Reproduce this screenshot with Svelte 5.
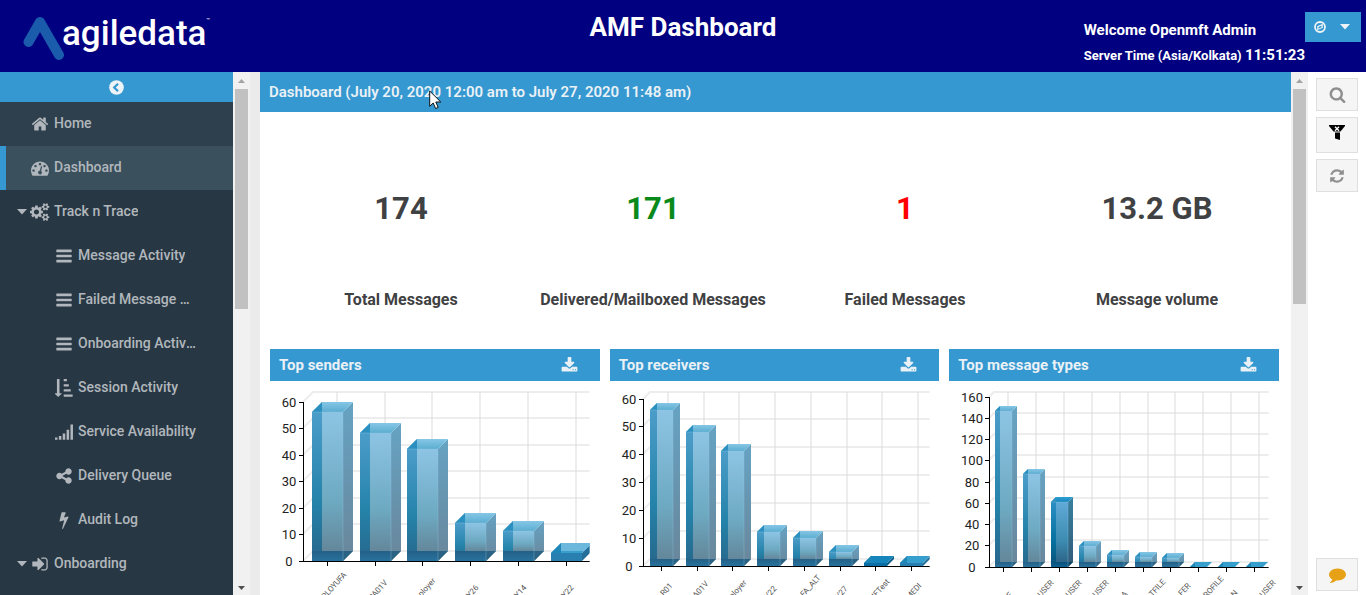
<script>
  const bars = 'M1664 1344v128q0 26-19 45t-45 19h-1408q-26 0-45-19t-19-45v-128q0-26 19-45t45-19h1408q26 0 45 19t19 45zm0-512v128q0 26-19 45t-45 19h-1408q-26 0-45-19t-19-45v-128q0-26 19-45t45-19h1408q26 0 45 19t19 45zm0-512v128q0 26-19 45t-45 19h-1408q-26 0-45-19t-19-45v-128q0-26 19-45t45-19h1408q26 0 45 19t19 45z';
  const icons = {
    home: 'M1472 992v480q0 26-19 45t-45 19h-384v-384h-256v384h-384q-26 0-45-19t-19-45v-480q0-1 .5-3t.5-3l575-474 575 474q1 2 1 6zm223-69l-62 74q-8 9-21 11h-3q-13 0-21-7l-692-577-692 577q-12 8-24 7-13-2-21-11l-62-74q-8-10-7-23.5t11-21.5l719-599q32-26 76-26t76 26l244 204v-195q0-14 9-23t23-9h192q14 0 23 9t9 23v408l219 182q10 8 11 21.5t-7 23.5z',
    gauge: 'M384 1152q0-53-37.5-90.5t-90.5-37.5-90.5 37.5-37.5 90.5 37.5 90.5 90.5 37.5 90.5-37.5 37.5-90.5zm192-448q0-53-37.5-90.5t-90.5-37.5-90.5 37.5-37.5 90.5 37.5 90.5 90.5 37.5 90.5-37.5 37.5-90.5zm428 481l101-382q6-26-7.5-48.5t-38.5-29.5-48 6.5-30 39.5l-101 382q-60 5-107 43.5t-63 98.5q-20 77 20 146t117 89 146-20 89-117q16-60-6-117t-72-91zm660-33q0-53-37.5-90.5t-90.5-37.5-90.5 37.5-37.5 90.5 37.5 90.5 90.5 37.5 90.5-37.5 37.5-90.5zm-640-640q0-53-37.5-90.5t-90.5-37.5-90.5 37.5-37.5 90.5 37.5 90.5 90.5 37.5 90.5-37.5 37.5-90.5zm448 192q0-53-37.5-90.5t-90.5-37.5-90.5 37.5-37.5 90.5 37.5 90.5 90.5 37.5 90.5-37.5 37.5-90.5zm320 448q0 261-141 483-19 29-54 29h-1402q-35 0-54-29-141-221-141-483 0-182 71-348t191-286 286-191 348-71 348 71 286 191 191 286 71 348z',
    cogs: 'M832 896q0-106-75-181t-181-75-181 75-75 181 75 181 181 75 181-75 75-181zm768 512q0-52-38-90t-90-38-90 38-38 90q0 53 37.5 90.5t90.5 37.5 90.5-37.5 37.5-90.5zm0-1024q0-52-38-90t-90-38-90 38-38 90q0 53 37.5 90.5t90.5 37.5 90.5-37.5 37.5-90.5zm-384 421v185q0 10-7 19.5t-16 10.5l-155 24q-11 35-32 76 34 48 90 115 7 11 7 20 0 12-7 19-23 30-82.500 89.500t-78.500 59.500q-11 0-21-7l-115-90q-37 19-77 31-11 108-23 155-7 24-30 24h-186q-11 0-20-7.500t-10-17.500l-23-153q-34-10-75-31l-118 89q-7 7-20 7-11 0-21-8-144-133-144-160 0-9 7-19 10-14 41-53t47-61q-23-44-35-82l-152-24q-10-1-17-9.500t-7-19.500v-185q0-10 7-19.500t16-10.500l155-24q11-35 32-76-34-48-90-115-7-11-7-20 0-12 7-20 22-30 82-89t79-59q11 0 21 7l115 90q34-18 77-32 11-108 23-154 7-24 30-24h186q11 0 20 7.500t10 17.500l23 153q34 10 75 31l118-89q8-7 20-7 11 0 21 8 144 133 144 160 0 8-7 19-12 16-42 54t-45 60q23 48 34 82l152 23q10 2 17 10.500t7 19.500zm640 533v140q0 16-149 31-12 27-30 52 51 113 51 138 0 4-4 7-122 71-124 71-8 0-46-47t-52-68q-20 2-30 2t-30-2q-14 21-52 68t-46 47q-2 0-124-71-4-3-4-7 0-25 51-138-18-25-30-52-149-15-149-31v-140q0-16 149-31 13-29 30-52-51-113-51-138 0-4 4-7 4-2 35-20t59-34 30-16q8 0 46 46.500t52 67.500q20-2 30-2t30 2q51-71 92-112l6-2q4 0 124 70 4 3 4 7 0 25-51 138 17 23 30 52 149 15 149 31zm0-1024v140q0 16-149 31-12 27-30 52 51 113 51 138 0 4-4 7-122 71-124 71-8 0-46-47t-52-68q-20 2-30 2t-30-2q-14 21-52 68t-46 47q-2 0-124-71-4-3-4-7 0-25 51-138-18-25-30-52-149-15-149-31v-140q0-16 149-31 13-29 30-52-51-113-51-138 0-4 4-7 4-2 35-20t59-34 30-16q8 0 46 46.500t52 67.500q20-2 30-2t30 2q51-71 92-112l6-2q4 0 124 70 4 3 4 7 0 25-51 138 17 23 30 52 149 15 149 31z',
    bars,
    sort: 'M224 0h192q32 0 32 32v1376h192q60 8 22 64l-320 300q-22 20-44 0l-320-300q-34-52 22-64h192V32q0-32 32-32zM896 0h256q32 0 32 32v160q0 32-32 32h-256q-32 0-32-32V32q0-32 32-32zM896 512h448q32 0 32 32v160q0 32-32 32h-448q-32 0-32-32V544q0-32 32-32zM896 1024h640q32 0 32 32v160q0 32-32 32h-640q-32 0-32-32v-160q0-32 32-32zM896 1536h832q32 0 32 32v160q0 32-32 32h-832q-32 0-32-32v-160q0-32 32-32z',
    signal: 'M0 1440h250v220H0zM385 1290h250v370H385zM770 1040h250v620H770zM1155 660h250v1000h-250zM1540 150h250v1510h-250z',
    share: 'M1344 1024q133 0 226.500 93.500t93.500 226.500-93.500 226.500-226.500 93.500-226.500-93.500-93.500-226.500q0-12 2-34l-360-180q-92 86-218 86-133 0-226.500-93.500t-93.500-226.500 93.500-226.500 226.500-93.500q126 0 218 86l360-180q-2-22-2-34 0-133 93.500-226.500t226.500-93.500 226.500 93.500 93.500 226.500-93.500 226.500-226.500 93.500q-126 0-218-86l-360 180q2 22 2 34t-2 34l360 180q92-86 218-86z',
    bolt: 'M1333 566q18 20 7 44l-540 1157q-13 25-42 25-4 0-14-2-17-5-25.500-19t-4.500-30l197-808-406 101q-4 1-12 1-18 0-31-11-18-15-13-39l201-825q4-14 16-23t28-9h328q19 0 32 12.500t13 29.500q0 8-5 18l-171 463 396-98q8-2 12-2 19 0 34 15z',
    signin: 'M1312 896q0 26-19 45l-544 544q-19 19-45 19t-45-19-19-45v-288h-448q-26 0-45-19t-19-45v-384q0-26 19-45t45-19h448v-288q0-26 19-45t45-19 45 19l544 544q19 19 19 45zm352-352v704q0 119-84.500 203.500t-203.500 84.500h-320q-13 0-22.500-9.500t-9.500-22.500q0-4-1-20t-.5-26.500 3-23.500 10-19.500 20.500-6.500h320q66 0 113-47t47-113v-704q0-66-47-113t-113-47h-312l-11.500-1-11.500-3-8-5.500-7-9-2-13.500q0-4-1-20t-.5-26.500 3-23.500 10-19.500 20.500-6.500h320q119 0 203.500 84.500t84.500 203.500z',
    download: 'M1344 1344q0-26-19-45t-45-19-45 19-19 45 19 45 45 19 45-19 19-45zm256 0q0-26-19-45t-45-19-45 19-19 45 19 45 45 19 45-19 19-45zm128-224v320q0 40-28 68t-68 28h-1472q-40 0-68-28t-28-68v-320q0-40 28-68t68-28h465l135 136q58 56 136 56t136-56l136-136h464q40 0 68 28t28 68zm-325-569q17 41-14 70l-448 448q-18 19-45 19t-45-19l-448-448q-31-29-14-70 17-39 59-39h256v-448q0-26 19-45t45-19h256q26 0 45 19t19 45v448h256q42 0 59 39z',
    search: 'M1216 832q0-185-131.500-316.500t-316.500-131.500-316.500 131.500-131.500 316.500 131.500 316.500 316.500 131.500 316.500-131.500 131.500-316.500zm512 832q0 52-38 90t-90 38q-54 0-90-38l-343-342q-179 124-399 124-143 0-273.500-55.500t-225-150-150-225-55.500-273.500 55.500-273.500 150-225 225-150 273.500-55.500 273.500 55.500 225 150 150 225 55.500 273.500q0 220-124 399l343 343q37 37 37 90z',
    refresh: 'M1639 1056q0 5-1 7-64 268-268 434.500t-478 166.500q-146 0-282.500-55t-243.500-157l-129 129q-19 19-45 19t-45-19-19-45v-448q0-26 19-45t45-19h448q26 0 45 19t19 45-19 45l-137 137q71 66 161 102t187 36q134 0 250-65t186-179q11-17 53-117 8-23 30-23h192q13 0 22.500 9.500t9.500 22.500zm25-800v448q0 26-19 45t-45 19h-448q-26 0-45-19t-19-45 19-45l138-138q-148-137-349-137-134 0-250 65t-186 179q-11 17-53 117-8 23-30 23h-199q-13 0-22.500-9.500t-9.500-22.500v-7q65-268 270-434.500t480-166.500q146 0 284 55.500t245 156.500l130-129q19-19 45-19t45 19 19 45z',
    comment: 'M1792 896q0 174-120 321.500t-326 233-450 85.500q-70 0-145-8-198 175-460 242-49 14-114 22-17 2-30.500-9t-17.500-29v-1q-3-4-.5-12t2-10 4.500-9.500l6-9 7-8.500 8-9q7-8 31-34.500t34.500-38 31-39.500 32.500-51 27-59 26-76q-157-89-247.500-220t-90.500-281q0-130 71-248.500t191-204.500 286-136.500 348-50.500q244 0 450 85.500t326 233 120 321.500z'
  };

  const menu = [
    { label: 'Home', icon: 'home', size: 18, kind: 'top' },
    { label: 'Dashboard', icon: 'gauge', size: 18, kind: 'active' },
    { label: 'Track n Trace', icon: 'cogs', size: 20, caret: true },
    { label: 'Message Activity', icon: 'bars', size: 18, sub: true },
    { label: 'Failed Message Activity', icon: 'bars', size: 18, sub: true },
    { label: 'Onboarding Activity', icon: 'bars', size: 18, sub: true },
    { label: 'Session Activity', icon: 'sort', size: 18, sub: true },
    { label: 'Service Availability', icon: 'signal', size: 18, sub: true },
    { label: 'Delivery Queue', icon: 'share', size: 18, sub: true },
    { label: 'Audit Log', icon: 'bolt', size: 18, sub: true },
    { label: 'Onboarding', icon: 'signin', size: 18, caret: true }
  ];

  const stats = [
    { value: '174', label: 'Total Messages', tone: '' },
    { value: '171', label: 'Delivered/Mailboxed Messages', tone: 'good' },
    { value: '1', label: 'Failed Messages', tone: 'bad' },
    { value: '13.2 GB', label: 'Message volume', tone: '' }
  ];

  // Each label carries the point at which its rotated text ends.
  const charts = [
    {
      title: 'Top senders', axis: 33, base: 180, top: 21, max: 60, every: 10,
      depth: 10, first: 42, step: 47.7, width: 31, tickX: 19,
      values: [56, 48, 42, 14, 11, 3], strong: [],
      labels: [['PLOYUFA', 77, 194], ['PA01V', 118, 202], ['ployer', 166, 200], ['Y26', 209, 207], ['Y14', 257, 207], ['Y22', 304, 207]]
    },
    {
      title: 'Top receivers', axis: 33, base: 185, top: 18, max: 60, every: 10,
      depth: 7, first: 40, step: 35.7, width: 23, tickX: 19,
      values: [56, 48, 41, 12, 10, 5, 1, 1], strong: [6],
      labels: [['LR01', 63, 205], ['A01V', 99, 203], ['ployer', 137, 202], ['Y22', 167, 208], ['FA_ALT', 211, 197], ['Y27', 238, 208], ['IFTest', 280, 201], ['MEDI', 312, 205]]
    },
    {
      title: 'Top message types', axis: 40, base: 186, top: 16, max: 160, every: 20,
      depth: 5, first: 46, step: 27.9, width: 17, tickX: 23,
      values: [146, 87, 61, 19, 11, 9, 8, 0, 0, 0], strong: [2],
      labels: [['E', 64, 214], ['USER', 105, 202], ['USER', 133, 202], ['USER', 160, 202], ['A', 179, 213], ['TFILE', 217, 201], ['FER', 242, 205], ['ROFILE', 275, 198], ['N', 289, 212], ['USER', 327, 202]]
    }
  ];

  function ticks(c) {
    const n = c.max / c.every;
    return Array.from({ length: n + 1 }, (_, i) => ({
      value: i * c.every,
      y: Math.floor(c.base - (i * (c.base - c.top)) / n)
    }));
  }

  function columns(c) {
    return c.values.map((v, i) => {
      const x = Math.round(c.first + i * c.step);
      const y = Math.floor(c.base - (v / c.max) * (c.base - c.top));
      return { x, y, r: x + c.width, h: c.base - y, mid: x + Math.round(c.width / 2) - 1, tone: c.strong.includes(i) ? 'strong' : 'soft' };
    });
  }
</script>

{#snippet glyph(name, size)}
  <svg class="glyph" width={size} height={Math.min(size, 18)} viewBox={name === 'cogs' ? '0 0 1856 1792' : '0 0 1792 1792'} aria-hidden="true">
    <path d={icons[name]} />
  </svg>
{/snippet}

{#snippet scrollbar(length)}
  <div class="scrollbar" aria-hidden="true">
    <svg width="17" height="17"><path d="M5 11h7l-3.500-4z" fill="#a3a3a3" /></svg>
    <div class="thumb" style:height="{length}px"></div>
    <svg class="down" width="17" height="17"><path d="M5 8h7l-3.500 4z" fill="#505050" /></svg>
  </div>
{/snippet}

<svg class="defs" width="0" height="0" aria-hidden="true">
  <defs>
    <linearGradient id="soft-left" x2="0" y2="1"><stop offset="0" stop-color="#4b9dc9" /><stop offset=".6" stop-color="#2583aa" /><stop offset="1" stop-color="#27668b" /></linearGradient>
    <linearGradient id="soft-mid" x2="0" y2="1"><stop offset="0" stop-color="#8dc4e4" /><stop offset=".65" stop-color="#6da9c1" /><stop offset="1" stop-color="#64879a" /></linearGradient>
    <linearGradient id="soft-right" x2="0" y2="1"><stop offset="0" stop-color="#66a3c3" /><stop offset="1" stop-color="#69869a" /></linearGradient>
    <linearGradient id="soft-top" x2="0" y2="1"><stop offset="0" stop-color="#86c6e6" /><stop offset="1" stop-color="#5badd0" /></linearGradient>
    <linearGradient id="soft-foot" x2="0" y2="1"><stop offset="0" stop-color="#245f86" /><stop offset="1" stop-color="#28739e" /></linearGradient>
    <linearGradient id="strong-left" x2="0" y2="1"><stop offset="0" stop-color="#2b8ec4" /><stop offset=".6" stop-color="#08719f" /><stop offset="1" stop-color="#0a5178" /></linearGradient>
    <linearGradient id="strong-mid" x2="0" y2="1"><stop offset="0" stop-color="#60aad8" /><stop offset=".65" stop-color="#3c8bb0" /><stop offset="1" stop-color="#2c6589" /></linearGradient>
    <linearGradient id="strong-right" x2="0" y2="1"><stop offset="0" stop-color="#38819f" /><stop offset="1" stop-color="#305a78" /></linearGradient>
    <linearGradient id="strong-top" x2="0" y2="1"><stop offset="0" stop-color="#2f9fd2" /><stop offset="1" stop-color="#1685bb" /></linearGradient>
    <linearGradient id="strong-foot" x2="0" y2="1"><stop offset="0" stop-color="#0a5079" /><stop offset="1" stop-color="#0d6293" /></linearGradient>
  </defs>
</svg>

<div class="app">
  <header>
    <a class="logo" href="#home" aria-label="agiledata">
      <svg width="44" height="48" viewBox="0 0 44 48" aria-hidden="true">
        <path d="M6.500 28 18 8 37 41" fill="none" stroke="#1a5cab" stroke-width="10" stroke-linecap="round" stroke-linejoin="round" />
      </svg>
      <span class="brand">agiledata</span><span class="tm">™</span>
    </a>
    <h1>AMF Dashboard</h1>
    <div class="account">
      <div class="welcome">
        <div class="user">Welcome Openmft Admin</div>
        <div class="time">Server Time (Asia/Kolkata) <span>11:51:23</span></div>
      </div>
      <button class="account-menu" aria-label="Account menu">
        <svg width="12" height="12" viewBox="0 0 12 12" aria-hidden="true">
          <circle cx="6" cy="6" r="5" fill="none" stroke="#eef3f7" stroke-width="1.800" />
          <path d="M8.800 2.700v4.100L3.200 9.300V5.200zM4.500 6v1.800L7.500 6.200V4.400z" fill="#eef3f7" fill-rule="evenodd" />
        </svg>
        <svg width="10" height="6" viewBox="0 0 10 6" aria-hidden="true"><path d="M0 0h10L5 5.500z" fill="#eef3f7" /></svg>
      </button>
    </div>
  </header>

  <div class="body">
    <nav aria-label="Main">
      <button class="collapse" aria-label="Collapse menu">
        <svg width="15" height="15" viewBox="0 0 15 15" aria-hidden="true">
          <circle cx="7.500" cy="7.500" r="7.300" fill="#eef3f7" />
          <path d="M9 3.700 5.200 7.500 9 11.300" fill="none" stroke="#3598d0" stroke-width="2.200" />
        </svg>
      </button>
      <ul>
        {#each menu as item}
          <li>
            <a href="#menu" class={item.kind ?? ''} class:sub={item.sub}>
              <span class="caret">
                {#if item.caret}
                  <svg width="10" height="6" viewBox="0 0 10 6" aria-hidden="true"><path d="M0 0h10L5 5.500z" /></svg>
                {/if}
              </span>
              <span class="icon">{@render glyph(item.icon, item.size)}</span>
              <span class="text">{item.label}</span>
            </a>
          </li>
        {/each}
      </ul>
    </nav>
    {@render scrollbar(220)}

    <main>
      <h2>Dashboard (July 20, 2020 12:00 am to July 27, 2020 11:48 am)</h2>
      <section class="stats">
        {#each stats as s}
          <div class="stat">
            <div class="value {s.tone}">{s.value}</div>
            <div class="label">{s.label}</div>
          </div>
        {/each}
      </section>

      <section class="charts">
        {#each charts as c}
          <article>
            <div class="panel-head">
              <h3>{c.title}</h3>
              <button aria-label="Download {c.title}">{@render glyph('download', 17)}</button>
            </div>
            <svg class="chart" height="230" role="img" aria-label={c.title}>
              <svg width="100%" height="200">
                <g class="grid">
                  {#each ticks(c) as t}
                    <path d="M{c.axis} {t.y}l{c.depth} {-c.depth}h400" />
                  {/each}
                  {#each columns(c) as b}
                    <path d="M{b.mid + c.depth} {c.top - c.depth}V{c.base - c.depth}" />
                  {/each}
                </g>
                {#each columns(c) as b}
                  {@const d = c.depth}
                  {#if b.h > d}
                    <path d="M{b.x} {b.y}h{d}V{c.base - d}L{b.x} {c.base}z" fill="url(#{b.tone}-left)" />
                    <path d="M{b.x + d} {b.y}H{b.r}V{c.base - d}H{b.x + d}z" fill="url(#{b.tone}-mid)" />
                    <path d="M{b.r} {b.y}l{d} {-d}V{c.base - d}L{b.r} {c.base}z" fill="url(#{b.tone}-right)" />
                    <path d="M{b.x} {c.base}v{-d}H{b.r}v{d}z" fill="url(#{b.tone}-foot)" />
                    <path d="M{b.r} {c.base}v{-d}h{d}z" fill={b.tone === 'strong' ? '#0a4568' : '#2a6283'} />
                    <path d="M{b.x} {b.y}l{d} {-d}H{b.r + d}L{b.r} {b.y}z" fill="url(#{b.tone}-top)" />
                    <path d="M{b.x} {b.y}l{d} {-d}v{d}z" fill="#2b8fbf" />
                    <path d="M{b.r} {b.y}V{c.base}M{b.x} {b.y}H{b.r}" stroke="#8fc5e2" stroke-opacity=".35" />
                  {:else}
                    <path d="M{b.x} {b.y}H{b.r}V{c.base}H{b.x}z" fill={b.tone === 'strong' ? '#0b6fa6' : '#287fb0'} />
                    <path d="M{b.r} {b.y}l{d} {-d}v{b.h}L{b.r} {c.base}z" fill={b.tone === 'strong' ? '#0d5d8a' : '#246f99'} />
                    <path d="M{b.x} {b.y}l{d} {-d}H{b.r + d}L{b.r} {b.y}z" fill={b.tone === 'strong' ? '#1685bb' : '#379fcd'} />
                    {#if b.h > 5}
                      <path d="M{b.x + d} {b.y - d}H{b.r + d}L{b.r + 2} {b.y - 2}H{b.x + d}z" fill="#6bb8dc" />
                    {/if}
                    <path d="M{b.x} {b.y}l{d} {-d}v{d}z" fill="#1f86b8" />
                  {/if}
                {/each}
                <g class="axis">
                  <path d="M{c.axis + 0.5} {c.top}V{c.base + 0.5}H420" />
                  {#each ticks(c) as t}<path d="M{c.axis - 4} {t.y + 0.5}h5" />{/each}
                  {#each columns(c) as b}<path d="M{b.mid + 0.5} {c.base}v5" />{/each}
                </g>
              </svg>
              {#each ticks(c) as t}
                <text class="tick" x={c.tickX} y={t.y + 5}>{t.value}</text>
              {/each}
              {#each c.labels as [text, x, y]}
                <text class="name" transform="translate({x} {y}) rotate(-48)">{text}</text>
              {/each}
            </svg>
          </article>
        {/each}
      </section>
    </main>
    {@render scrollbar(215)}

    <aside>
      <button aria-label="Search">{@render glyph('search', 17)}</button>
      <button class="filter" aria-label="Clear filter">
        <svg width="16" height="16" viewBox="0 0 16 16" aria-hidden="true">
          <path d="M0 0h16v1l-4.500 5.500h-7L0 1zM5 7.500h6V15l-5-1.500V7.500z" fill="#000" />
          <path d="m6 1.800 4 4m0-4-4 4" stroke="#fff" stroke-width="1.300" />
        </svg>
      </button>
      <button aria-label="Refresh">{@render glyph('refresh', 16)}</button>
      <button class="chat" aria-label="Comments">{@render glyph('comment', 17)}</button>
    </aside>
  </div>

  <svg class="pointer" width="13" height="20" viewBox="0 0 13 20" aria-hidden="true">
    <path d="M.7 1v15.300l3.500-3.300 2.400 5.500 2.600-1.100-2.400-5.400h5z" fill="#fff" stroke="#111" />
  </svg>
</div>

<style>
  :global(body) {
    margin: 0;
    overflow: hidden;
  }
  .app {
    display: flex;
    flex-direction: column;
    height: 100vh;
    font-family: Roboto, "Liberation Sans", sans-serif;
    background: #fff;
  }
  .defs {
    position: absolute;
  }
  h1, h2, h3, ul {
    margin: 0;
    padding: 0;
  }
  button {
    border: 0;
    padding: 0;
    font: inherit;
    cursor: pointer;
  }
  svg {
    display: block;
    flex: none;
  }
  .glyph {
    fill: currentColor;
  }

  header {
    display: grid;
    grid-template-columns: 1fr auto 1fr;
    height: 72px;
    flex: none;
    background: #000080;
    color: #fff;
  }
  .logo {
    display: flex;
    align-items: flex-start;
    padding: 14px 0 0 22px;
    color: #fff;
    text-decoration: none;
  }
  .brand {
    margin-left: -4px;
    font-size: 35px;
    line-height: 40px;
    font-weight: 500;
  }
  .tm {
    font-size: 6px;
    line-height: 12px;
  }
  h1 {
    padding-top: 10px;
    font-size: 26px;
    line-height: 34px;
    font-weight: 700;
  }
  .account {
    display: flex;
    justify-content: flex-end;
    align-items: flex-start;
    padding-right: 5px;
    font-weight: 700;
    white-space: nowrap;
  }
  .welcome {
    padding-top: 17px;
  }
  .user {
    font-size: 15px;
    line-height: 26px;
  }
  .time {
    font-size: 13px;
    line-height: 25px;
  }
  .time span {
    font-size: 15px;
  }
  .account-menu {
    display: flex;
    align-items: center;
    gap: 14px;
    width: 56px;
    height: 30px;
    margin-top: 12px;
    padding-left: 9px;
    background: #3598d0;
  }

  .body {
    display: flex;
    flex: 1;
    min-height: 0;
  }
  nav {
    width: 233px;
    flex: none;
    overflow: hidden;
    background: #283744;
  }
  .collapse {
    display: flex;
    align-items: center;
    justify-content: center;
    width: 100%;
    height: 30px;
    background: #3598d0;
  }
  ul {
    list-style: none;
  }
  nav a {
    display: flex;
    align-items: center;
    height: 44px;
    box-sizing: border-box;
    padding: 0 36px 0 17px;
    color: #b1b7bc;
    font-size: 14px;
    line-height: 20px;
    font-weight: 500;
    text-decoration: none;
  }
  nav a.top {
    background: #2e404d;
  }
  nav a.active {
    padding-left: 11px;
    border-left: 6px solid #3598d0;
    background: #3a505d;
  }
  nav a.sub {
    padding-left: 41px;
  }
  .caret {
    width: 13px;
    flex: none;
    fill: currentColor;
  }
  .icon {
    display: flex;
    justify-content: center;
    width: 20px;
    margin-right: 4px;
    flex: none;
  }
  .text {
    overflow: hidden;
    padding-bottom: 2px;
    white-space: nowrap;
    text-overflow: ellipsis;
  }

  .scrollbar {
    display: flex;
    flex-direction: column;
    width: 17px;
    flex: none;
    background: #f1f1f1;
  }
  .thumb {
    margin: 0 2px;
    background: #c1c1c1;
  }
  .down {
    margin-top: auto;
  }

  main {
    flex: 1;
    min-width: 0;
    overflow: hidden;
    border-left: 10px solid #ebebeb;
    color: #3f4143;
  }
  h2 {
    padding-left: 9px;
    background: #3598d0;
    color: #eaf1f6;
    font-size: 15px;
    line-height: 40px;
    font-weight: 600;
  }
  .stats {
    display: grid;
    grid-template-columns: repeat(4, 1fr);
    padding: 77px 8px 37px 15px;
    text-align: center;
  }
  .value {
    font-size: 31px;
    line-height: 40px;
    font-weight: 700;
  }
  .good {
    color: #0b8a1c;
  }
  .bad {
    color: #f00;
  }
  .label {
    margin-top: 58px;
    font-size: 16px;
    line-height: 25px;
    font-weight: 700;
  }
  .charts {
    display: grid;
    grid-template-columns: repeat(3, minmax(0, 1fr));
    gap: 10px;
    padding: 0 12px 0 10px;
  }
  .panel-head {
    display: flex;
    align-items: center;
    justify-content: space-between;
    height: 32px;
    padding: 0 22px 0 9px;
    background: #3598d0;
    color: #eaf1f6;
  }
  .panel-head button {
    background: none;
    color: inherit;
  }
  h3 {
    font-size: 15px;
    line-height: 32px;
    font-weight: 700;
  }
  .chart {
    width: calc(100% - 10px);
    overflow: visible;
  }
  .grid path {
    fill: none;
    stroke: #dcdcdc;
    stroke-opacity: .5;
    stroke-width: 2;
  }
  .axis path {
    fill: none;
    stroke: #000;
    shape-rendering: crispEdges;
  }
  .tick {
    fill: #222;
    font-size: 13px;
    text-anchor: middle;
  }
  .name {
    fill: #555;
    font-size: 8px;
    text-anchor: end;
  }

  aside {
    display: flex;
    flex-direction: column;
    gap: 6px;
    padding: 6px 8px 4px;
    flex: none;
  }
  aside button {
    display: flex;
    align-items: center;
    justify-content: center;
    box-sizing: border-box;
    width: 42px;
    height: 33px;
    border: 1px solid #dfdfdf;
    background: #f5f5f5;
    color: #8f8f8f;
  }
  aside .filter {
    height: 36px;
    padding-bottom: 4px;
  }
  aside .chat {
    margin-top: auto;
    color: #e6a117;
  }
  .pointer {
    position: absolute;
    left: 429px;
    top: 90px;
  }
</style>
